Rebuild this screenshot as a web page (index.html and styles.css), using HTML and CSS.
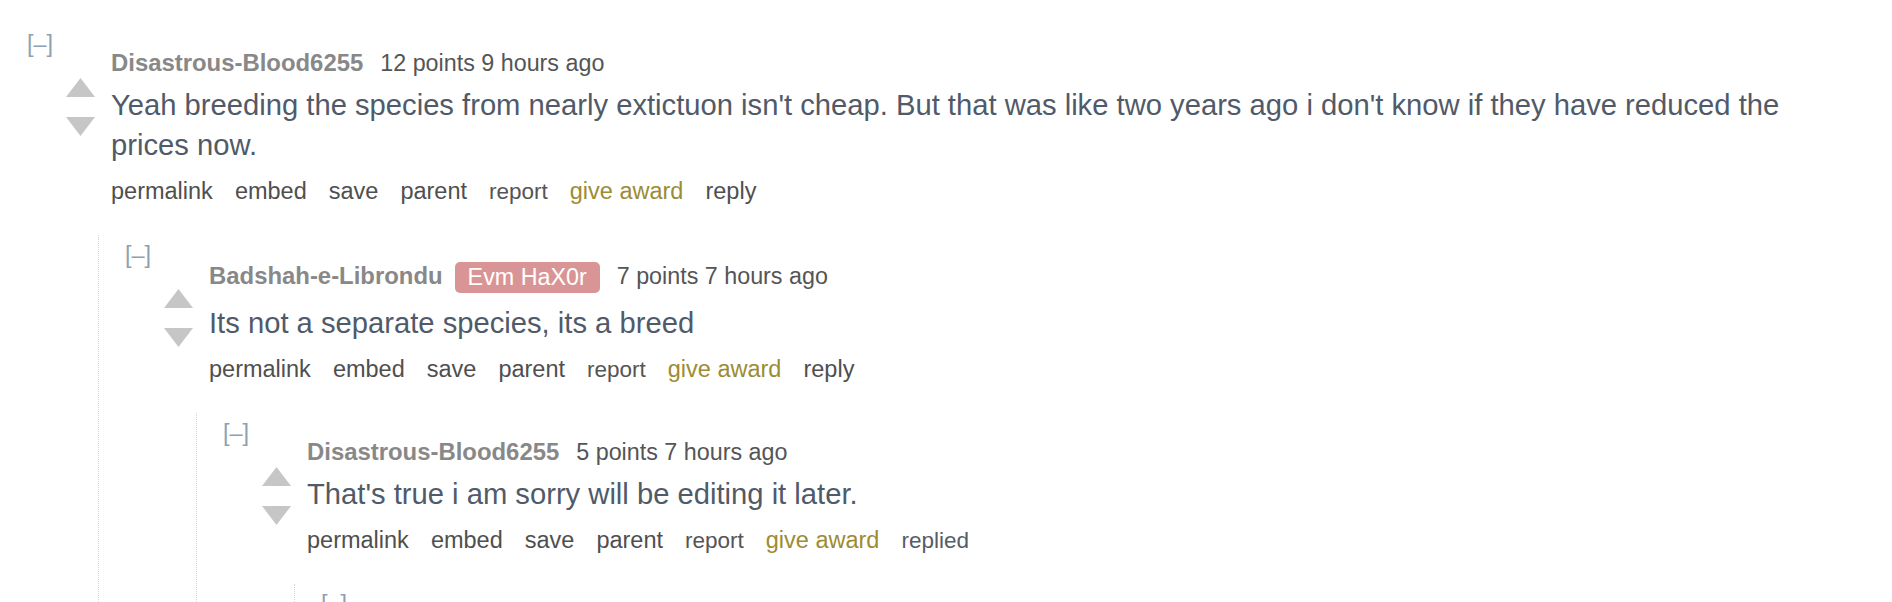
FILE: index.html
```html
<!DOCTYPE html>
<html>
<head>
<meta charset="utf-8">
<link rel="stylesheet" href="styles.css">
</head>
<body>
<div class="page">
  <div class="comment">
    <a class="expand">[–]</a>
    <div class="entry-row">
      <div class="midcol">
        <svg class="arrow" viewBox="0 0 29 19"><polygon points="14.5,0 29,19 0,19"/></svg>
        <svg class="arrow down" viewBox="0 0 29 19"><polygon points="0,0 29,0 14.5,19"/></svg>
      </div>
      <div class="entry">
        <p class="tagline"><span class="author">Disastrous-Blood6255</span><span class="score">12 points</span> <span class="time">9 hours ago</span></p>
        <div class="md">Yeah breeding the species from nearly extictuon isn't cheap. But that was like two years ago i don't know if they have reduced the prices now.</div>
        <ul class="buttons">
          <li>permalink</li><li>embed</li><li>save</li><li>parent</li><li class="small">report</li><li class="award">give award</li><li>reply</li>
        </ul>
      </div>
    </div>
    <div class="child">
      <div class="comment">
        <a class="expand">[–]</a>
        <div class="entry-row">
          <div class="midcol">
            <svg class="arrow" viewBox="0 0 29 19"><polygon points="14.5,0 29,19 0,19"/></svg>
            <svg class="arrow down" viewBox="0 0 29 19"><polygon points="0,0 29,0 14.5,19"/></svg>
          </div>
          <div class="entry">
            <p class="tagline"><span class="author">Badshah-e-Librondu</span><span class="flair">Evm HaX0r</span><span class="score">7 points</span> <span class="time">7 hours ago</span></p>
            <div class="md">Its not a separate species, its a breed</div>
            <ul class="buttons">
              <li>permalink</li><li>embed</li><li>save</li><li>parent</li><li class="small">report</li><li class="award">give award</li><li>reply</li>
            </ul>
          </div>
        </div>
        <div class="child">
          <div class="comment">
            <a class="expand">[–]</a>
            <div class="entry-row">
              <div class="midcol">
                <svg class="arrow" viewBox="0 0 29 19"><polygon points="14.5,0 29,19 0,19"/></svg>
                <svg class="arrow down" viewBox="0 0 29 19"><polygon points="0,0 29,0 14.5,19"/></svg>
              </div>
              <div class="entry">
                <p class="tagline"><span class="author">Disastrous-Blood6255</span><span class="score">5 points</span> <span class="time">7 hours ago</span></p>
                <div class="md">That's true i am sorry will be editing it later.</div>
                <ul class="buttons">
                  <li>permalink</li><li>embed</li><li>save</li><li>parent</li><li class="small">report</li><li class="award">give award</li><li class="small replied">replied</li>
                </ul>
              </div>
            </div>
            <div class="child last">
              <div class="comment">
                <a class="expand">[–]</a>
              </div>
            </div>
          </div>
        </div>
      </div>
    </div>
  </div>
</div>
</body>
</html>
```

FILE: styles.css
```css
html, body {
  margin: 0;
  padding: 0;
  background: #ffffff;
}

body {
  font-family: "Liberation Sans", Arial, Helvetica, sans-serif;
  height: 602px;
  overflow: hidden;
}

.page {
  padding: 38px 0 0 27px;
}

.comment {
  display: flex;
  flex-direction: column;
}

.expand {
  display: block;
  height: 16px;
  line-height: 16px;
  margin: -2px 0 2px;
  font-size: 23.5px;
  color: #8ea0b4;
  white-space: nowrap;
}

.entry-row {
  display: flex;
}

.midcol {
  width: 84px;
  flex: none;
  display: flex;
  flex-direction: column;
  padding: 24px 0 0 39px;
  box-sizing: border-box;
  gap: 20px;
}

.arrow {
  display: block;
  width: 29px;
  height: 19px;
  fill: #c6c6c6;
}

.entry {
  flex: 1;
  min-width: 0;
}

.tagline {
  margin: 0;
  font-size: 23.3px;
  line-height: 18px;
  color: #555555;
  white-space: nowrap;
}

.author {
  font-weight: bold;
  color: #888888;
  font-size: 23.9px;
  margin-right: 17px;
}

.flair {
  display: inline-block;
  vertical-align: middle;
  background: #d99595;
  color: #ffffff;
  border-radius: 5px;
  height: 31px;
  line-height: 31px;
  padding: 0 13px;
  margin: -3px 17px -3px -5px;
  font-size: 23.3px;
}

.md {
  margin-top: 13px;
  font-size: 29.2px;
  line-height: 40px;
  color: #505a69;
  max-width: 1720px;
}

.buttons {
  list-style: none;
  margin: 10px 0 0 0;
  padding: 0;
  display: flex;
  align-items: baseline;
  gap: 22px;
  font-size: 23.5px;
  line-height: 32px;
  color: #4f4f4f;
  white-space: nowrap;
}

.buttons .small {
  font-size: 22.5px;
  color: #555555;
}

.buttons .award {
  color: #9c8c33;
}

.buttons .replied {
  color: #555d68;
}

.child {
  margin: 27px 0 0 71px;
  padding: 14px 0 0 26px;
  border-left: 1px dotted #d2d2f8;
}

.child.last {
  padding-bottom: 40px;
}
```
